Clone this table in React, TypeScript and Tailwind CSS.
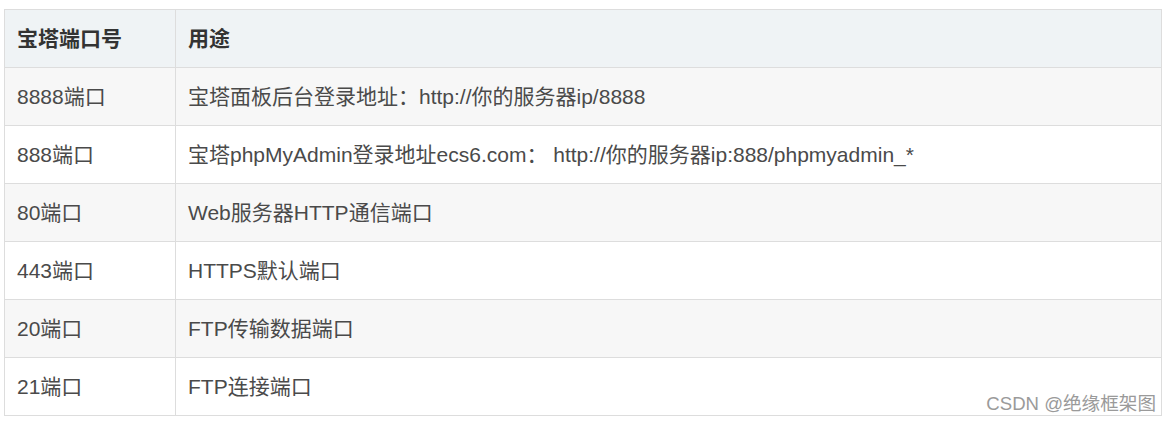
import React from 'react';

type PortRow = {
  port: string;
  usage: string;
};

const rows: PortRow[] = [
  { port: '8888端口', usage: '宝塔面板后台登录地址：http://你的服务器ip/8888' },
  { port: '888端口', usage: '宝塔phpMyAdmin登录地址ecs6.com： http://你的服务器ip:888/phpmyadmin_*' },
  { port: '80端口', usage: 'Web服务器HTTP通信端口' },
  { port: '443端口', usage: 'HTTPS默认端口' },
  { port: '20端口', usage: 'FTP传输数据端口' },
  { port: '21端口', usage: 'FTP连接端口' },
];

const App: React.FC = () => {
  return (
    <div
      className="relative w-[1169px] h-[424px] bg-white pl-[4px] pt-[9px] text-[#4a4a4a]"
      style={{ fontFamily: '"Liberation Sans", "Noto Sans CJK SC", sans-serif' }}
    >
      <table className="w-[1158px] border-collapse text-[21px] leading-none">
        <thead className="bg-[#eff3f5]">
          <tr className="h-[58px]">
            <th className="w-[171px] border border-[#dddddd] px-[12px] text-left font-bold text-[#333333]">宝塔端口号</th>
            <th className="border border-[#dddddd] px-[12px] text-left font-bold text-[#333333]">用途</th>
          </tr>
        </thead>
        <tbody>
          {rows.map((row, i) => (
            <tr key={row.port} className={i % 2 === 0 ? 'h-[58px] bg-[#f7f7f7]' : 'h-[58px] bg-white'}>
              <td className="border border-[#dddddd] px-[12px]">{row.port}</td>
              <td className="border border-[#dddddd] px-[12px]">{row.usage}</td>
            </tr>
          ))}
        </tbody>
      </table>
      {/* watermark */}
      <div className="absolute right-[13px] top-[395px] text-[18.6px] leading-none text-[#9a9a9a]">
        CSDN @绝缘框架图
      </div>
    </div>
  );
};

export default App;
